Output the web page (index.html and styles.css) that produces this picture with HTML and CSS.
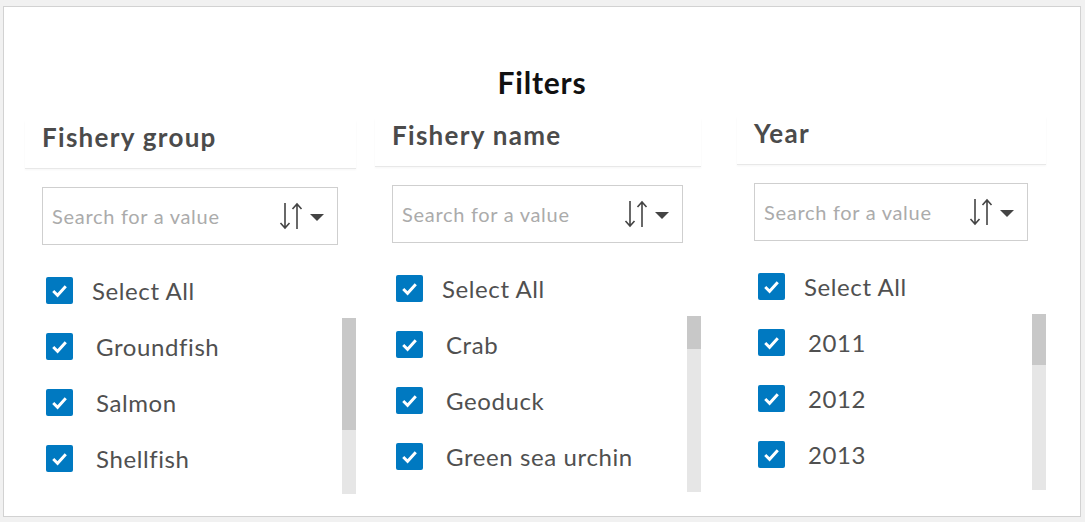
FILE: index.html
```html
<!DOCTYPE html>
<html lang="en">
<head>
<meta charset="utf-8">
<title>Filters</title>
<link rel="stylesheet" href="styles.css">
</head>
<body>
<div class="panel">
  <h1 class="title">Filters</h1>
  <div class="columns">
    <section class="filter col-group">
      <h2 class="filter-header">Fishery group</h2>
      <div class="search">
        <span class="placeholder">Search for a value</span>
        <svg class="sort-icon" width="46" height="30" viewBox="0 0 46 30"><path d="M6 2V27M1.5 22L6 27L10.5 22M18 3V28M13.5 8L18 3L22.5 8" fill="none" stroke="#444" stroke-width="1.6"/><path d="M31 13H45L38 20Z" fill="#444"/></svg>
      </div>
      <div class="row select-all"><span class="box"><svg viewBox="0 0 28 28" width="27" height="27"><path d="M7.5 14.5L12 19L20.5 9.5" fill="none" stroke="#fff" stroke-width="3"/></svg></span><span class="label">Select All</span></div>
      <div class="list-wrap">
        <div class="list">
          <div class="row"><span class="box"><svg viewBox="0 0 28 28" width="27" height="27"><path d="M7.5 14.5L12 19L20.5 9.5" fill="none" stroke="#fff" stroke-width="3"/></svg></span><span class="label">Groundfish</span></div>
          <div class="row"><span class="box"><svg viewBox="0 0 28 28" width="27" height="27"><path d="M7.5 14.5L12 19L20.5 9.5" fill="none" stroke="#fff" stroke-width="3"/></svg></span><span class="label">Salmon</span></div>
          <div class="row"><span class="box"><svg viewBox="0 0 28 28" width="27" height="27"><path d="M7.5 14.5L12 19L20.5 9.5" fill="none" stroke="#fff" stroke-width="3"/></svg></span><span class="label">Shellfish</span></div>
        </div>
        <div class="scrollbar"><div class="thumb" style="height:112px"></div></div>
      </div>
    </section>
    <section class="filter col-name">
      <h2 class="filter-header">Fishery name</h2>
      <div class="search">
        <span class="placeholder">Search for a value</span>
        <svg class="sort-icon" width="46" height="30" viewBox="0 0 46 30"><path d="M6 2V27M1.5 22L6 27L10.5 22M18 3V28M13.5 8L18 3L22.5 8" fill="none" stroke="#444" stroke-width="1.6"/><path d="M31 13H45L38 20Z" fill="#444"/></svg>
      </div>
      <div class="row select-all"><span class="box"><svg viewBox="0 0 28 28" width="27" height="27"><path d="M7.5 14.5L12 19L20.5 9.5" fill="none" stroke="#fff" stroke-width="3"/></svg></span><span class="label">Select All</span></div>
      <div class="list-wrap">
        <div class="list">
          <div class="row"><span class="box"><svg viewBox="0 0 28 28" width="27" height="27"><path d="M7.5 14.5L12 19L20.5 9.5" fill="none" stroke="#fff" stroke-width="3"/></svg></span><span class="label">Crab</span></div>
          <div class="row"><span class="box"><svg viewBox="0 0 28 28" width="27" height="27"><path d="M7.5 14.5L12 19L20.5 9.5" fill="none" stroke="#fff" stroke-width="3"/></svg></span><span class="label">Geoduck</span></div>
          <div class="row"><span class="box"><svg viewBox="0 0 28 28" width="27" height="27"><path d="M7.5 14.5L12 19L20.5 9.5" fill="none" stroke="#fff" stroke-width="3"/></svg></span><span class="label">Green sea urchin</span></div>
        </div>
        <div class="scrollbar"><div class="thumb" style="height:33px"></div></div>
      </div>
    </section>
    <section class="filter col-year">
      <h2 class="filter-header">Year</h2>
      <div class="search">
        <span class="placeholder">Search for a value</span>
        <svg class="sort-icon" width="46" height="30" viewBox="0 0 46 30"><path d="M6 2V27M1.5 22L6 27L10.5 22M18 3V28M13.5 8L18 3L22.5 8" fill="none" stroke="#444" stroke-width="1.6"/><path d="M31 13H45L38 20Z" fill="#444"/></svg>
      </div>
      <div class="row select-all"><span class="box"><svg viewBox="0 0 28 28" width="27" height="27"><path d="M7.5 14.5L12 19L20.5 9.5" fill="none" stroke="#fff" stroke-width="3"/></svg></span><span class="label">Select All</span></div>
      <div class="list-wrap">
        <div class="list">
          <div class="row"><span class="box"><svg viewBox="0 0 28 28" width="27" height="27"><path d="M7.5 14.5L12 19L20.5 9.5" fill="none" stroke="#fff" stroke-width="3"/></svg></span><span class="label">2011</span></div>
          <div class="row"><span class="box"><svg viewBox="0 0 28 28" width="27" height="27"><path d="M7.5 14.5L12 19L20.5 9.5" fill="none" stroke="#fff" stroke-width="3"/></svg></span><span class="label">2012</span></div>
          <div class="row"><span class="box"><svg viewBox="0 0 28 28" width="27" height="27"><path d="M7.5 14.5L12 19L20.5 9.5" fill="none" stroke="#fff" stroke-width="3"/></svg></span><span class="label">2013</span></div>
        </div>
        <div class="scrollbar"><div class="thumb" style="height:51px"></div></div>
      </div>
    </section>
  </div>
</div>
</body>
</html>
```
FILE: styles.css
```css
html, body {
  margin: 0;
  padding: 0;
}
body {
  background: #f1f1f1;
  font-family: Lato, "Open Sans", "Liberation Sans", sans-serif;
  color: #4a4a4a;
}
.panel {
  box-sizing: border-box;
  margin: 6px 4px 0 3px;
  width: 1078px;
  height: 511px;
  background: #fff;
  border: 1px solid #d2d2d2;
  padding-top: 57px;
  overflow: hidden;
}
.title {
  margin: 0;
  text-align: center;
  font-size: 30px;
  line-height: 36px;
  font-weight: 700;
  letter-spacing: 0.8px;
  color: #111;
}
.columns {
  display: flex;
  align-items: flex-start;
  padding-left: 21px;
}
.filter {
  display: flex;
  flex-direction: column;
}
.col-group { width: 331px; margin-top: 21px; }
.col-name { width: 326px; margin-top: 19px; margin-left: 19px; }
.col-year { width: 309px; margin-top: 17px; margin-left: 36px; }

.filter-header {
  margin: 0;
  padding: 0 0 15px 17px;
  font-size: 26px;
  line-height: 32px;
  font-weight: 700;
  letter-spacing: 1.3px;
  color: #4b4b4b;
  border-bottom: 1px solid #e8e8e8;
  box-shadow: 0 1px 2px rgba(0,0,0,0.04);
}
.search {
  box-sizing: border-box;
  margin: 18px 18px 0 17px;
  height: 58px;
  border: 1px solid #cfcfcf;
  display: flex;
  align-items: center;
  justify-content: space-between;
  padding: 0 12px 0 9px;
}
.placeholder {
  font-size: 20px;
  font-weight: 400;
  letter-spacing: 0.7px;
  color: #ababab;
}
.sort-icon { display: block; }

.row {
  height: 56px;
  display: flex;
  align-items: center;
  padding-left: 21px;
}
.select-all { margin-top: 17px; }
.box {
  width: 27px;
  height: 27px;
  border-radius: 2px;
  background: #0079c1;
  display: flex;
  flex-shrink: 0;
}
.box svg { display: block; }
.label {
  margin-left: 23px;
  font-size: 24px;
  font-weight: 400;
  letter-spacing: 0.6px;
  color: #505050;
}
.select-all .label { margin-left: 19px; }

.list-wrap {
  display: flex;
  height: 176px;
}
.list {
  flex: 1;
  overflow: hidden;
}
.scrollbar {
  width: 14px;
  background: #e6e6e6;
}
.thumb {
  background: #c8c8c8;
}
```
